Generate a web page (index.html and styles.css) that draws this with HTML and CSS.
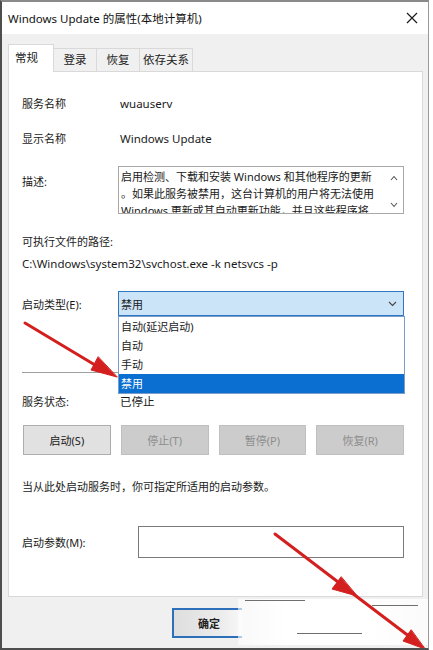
FILE: index.html
```html
<!DOCTYPE html>
<html lang="zh-CN">
<head>
    <meta charset="UTF-8">
    <meta name="viewport" content="width=device-width, initial-scale=1.0">
    <title>Windows Update 的属性(本地计算机)</title>
    <link rel="stylesheet" href="styles.css">
</head>
<body>
    <div class="window">
        <div class="titlebar">
            <span class="title">Windows Update 的属性(本地计算机)</span>
            <svg class="close" width="12" height="12" viewBox="0 0 12 12">
                <path d="M1 1 L11 11 M11 1 L1 11" stroke="#1a1a1a" stroke-width="1.2" fill="none"/>
            </svg>
        </div>

        <div class="tabs">
            <div class="tab active">常规</div>
            <div class="tab">登录</div>
            <div class="tab">恢复</div>
            <div class="tab">依存关系</div>
        </div>

        <div class="panel">
            <div class="row">
                <span class="label">服务名称</span>
                <span class="value">wuauserv</span>
            </div>
            <div class="row row-display">
                <span class="label">显示名称</span>
                <span class="value">Windows Update</span>
            </div>
            <div class="row row-desc">
                <span class="label">描述:</span>
                <div class="desc">
                    <div class="desc-text">
                        <span>启用检测、下载和安装 Windows 和其他程序的更新</span>
                        <span>。如果此服务被禁用，这台计算机的用户将无法使用</span>
                        <span>Windows 更新或其自动更新功能，并且这些程序将</span>
                    </div>
                    <div class="desc-scroll">
                        <svg width="8" height="6" viewBox="0 0 8 6"><path d="M1 5 L4 1.5 L7 5" stroke="#555" stroke-width="1.1" fill="none"/></svg>
                        <svg width="8" height="6" viewBox="0 0 8 6"><path d="M1 1 L4 4.5 L7 1" stroke="#555" stroke-width="1.1" fill="none"/></svg>
                    </div>
                </div>
            </div>

            <div class="path-label">可执行文件的路径:</div>
            <div class="path">C:\Windows\system32\svchost.exe -k netsvcs -p</div>

            <div class="row row-startup">
                <span class="label">启动类型(E):</span>
                <div class="select">
                    <span>禁用</span>
                    <svg width="9" height="6" viewBox="0 0 9 6"><path d="M1 1 L4.5 4.5 L8 1" stroke="#444" stroke-width="1.1" fill="none"/></svg>
                    <ul class="options">
                        <li>自动(延迟启动)</li>
                        <li>自动</li>
                        <li>手动</li>
                        <li class="selected">禁用</li>
                    </ul>
                </div>
            </div>

            <div class="sep"></div>

            <div class="row row-status">
                <span class="label">服务状态:</span>
                <span class="value">已停止</span>
            </div>

            <div class="buttons">
                <button class="btn">启动(S)</button>
                <button class="btn" disabled>停止(T)</button>
                <button class="btn" disabled>暂停(P)</button>
                <button class="btn" disabled>恢复(R)</button>
            </div>

            <p class="hint">当从此处启动服务时，你可指定所适用的启动参数。</p>

            <div class="row row-params">
                <span class="label">启动参数(M):</span>
                <div class="input"></div>
            </div>
        </div>

        <div class="footer">
            <button class="btn-ok">确定</button>
            <!-- erased area next to the OK button -->
            <div class="smear">
                <i class="streak s1"></i>
                <i class="streak s2"></i>
                <i class="streak s3"></i>
            </div>
        </div>

        <!-- red pointer arrows drawn over the dialog -->
        <svg class="arrows" width="433" height="650" viewBox="0 0 433 650">
            <g fill="#d41f1f" stroke="#d41f1f" stroke-linecap="round">
                <line x1="25" y1="323" x2="100" y2="368" stroke-width="3"/>
                <polygon points="117,377 91,370 98,357" stroke-width="1"/>

                <line x1="275" y1="534" x2="342" y2="585" stroke-width="3"/>
                <polygon points="357,596 332,589 341,577" stroke-width="1"/>
                <line x1="352" y1="593" x2="414" y2="640" stroke-width="3"/>
                <polygon points="425,649 403,641 411,630" stroke-width="1"/>
            </g>
        </svg>
    </div>
</body>
</html>
```

FILE: styles.css
```css
/* Base */
body {
    margin: 0;
    background: #ffffff;
    font-family: "Noto Sans", "Noto Sans CJK SC", sans-serif;
    font-size: 11px;
    color: #1a1a1a;
}

/* Dialog frame */
.window {
    position: relative;
    width: 429px;
    height: 650px;
    box-sizing: border-box;
    border-left: 2px solid #4e4e4e;
    border-top: 2px solid #8a8a8a;
    border-right: 1px solid #9a9a9a;
    border-bottom: 2px solid #4e4e4e;
    background: #f0f0f0;
    display: flex;
    flex-direction: column;
    overflow: hidden;
}

/* Title bar */
.titlebar {
    height: 32px;
    background: #ffffff;
    display: flex;
    align-items: center;
    justify-content: space-between;
    padding: 0 10px 0 6px;
    flex-shrink: 0;
}

.title {
    font-size: 11.5px;
    color: #111;
}

/* Tabs */
.tabs {
    display: flex;
    align-items: flex-end;
    height: 37px;
    padding-left: 6px;
    flex-shrink: 0;
}

.tab {
    height: 23px;
    line-height: 22px;
    padding: 0;
    text-align: center;
    white-space: nowrap;
    border: 1px solid #d9d9d9;
    border-bottom: none;
    border-left: none;
    box-sizing: border-box;
    color: #222;
    font-size: 11.5px;
}

.tab.active {
    height: 28px;
    line-height: 26px;
    width: 46px;
    text-align: left;
    padding: 0 6px;
    background: #ffffff;
    border-left: 1px solid #d9d9d9;
    margin-bottom: -1px;
    position: relative;
    z-index: 1;
}

.tab:nth-child(2) { width: 43px; }
.tab:nth-child(3) { width: 43px; }
.tab:nth-child(4) { width: 53px; }

/* Tab page */
.panel {
    margin: 0 5px 0 6px;
    background: #ffffff;
    border: 1px solid #d9d9d9;
    padding: 23px 18px 38px 13px;
    flex-shrink: 0;
}

.row {
    display: flex;
    align-items: center;
    height: 16px;
}

.label {
    width: 96px;
    flex-shrink: 0;
}

.value {
    margin-left: 2px;
    font-size: 11.5px;
}

.row-display {
    margin-top: 19px;
}

/* Description box */
.row-desc {
    margin-top: 20px;
    height: 48px;
    align-items: flex-start;
}

.row-desc .label {
    padding-top: 7px;
}

.desc {
    flex: 1;
    height: 48px;
    box-sizing: border-box;
    border: 1px solid #a8a8a8;
    display: flex;
    overflow: hidden;
}

.desc-text {
    flex: 1;
    padding: 1px 0 0 2px;
    line-height: 17px;
}

.desc-text span {
    display: block;
    white-space: nowrap;
}

.desc-scroll {
    width: 18px;
    display: flex;
    flex-direction: column;
    justify-content: space-between;
    align-items: center;
    padding: 8px 0 5px;
}

/* Executable path */
.path-label {
    margin-top: 20px;
    height: 16px;
    line-height: 16px;
}

.path {
    margin-top: 6px;
    height: 16px;
    line-height: 16px;
    font-size: 11.5px;
}

/* Startup type combo */
.row-startup {
    margin-top: 19px;
    height: 25px;
}

.select {
    position: relative;
    flex: 1;
    height: 25px;
    box-sizing: border-box;
    background: #cce4f7;
    border: 1px solid #2f77c0;
    display: flex;
    align-items: center;
    justify-content: space-between;
    padding: 0 6px 0 2px;
}

.options {
    position: absolute;
    top: 24px;
    left: -1px;
    right: -2px;
    margin: 0;
    padding: 0;
    list-style: none;
    background: #ffffff;
    border: 1px solid #7a9cc6;
    z-index: 2;
}

.options li {
    height: 19px;
    line-height: 19px;
    padding-left: 2px;
}

.options li.selected {
    background: #0a6fd1;
    color: #ffffff;
}

.sep {
    margin-top: 56px;
    height: 1px;
    background: #a0a0a0;
}

.row-status {
    margin-top: 20px;
}

/* Service control buttons */
.buttons {
    margin: 16px 0 0 1px;
    display: grid;
    grid-template-columns: repeat(4, 1fr);
    gap: 10px;
}

.btn {
    height: 30px;
    font-family: inherit;
    font-size: 11px;
    color: #1a1a1a;
    background: #e1e1e1;
    border: 1px solid #adadad;
}

.btn:disabled {
    background: #cccccc;
    border-color: #bfbfbf;
    color: #8c8c8c;
}

.hint {
    margin: 24px 0 0;
    height: 16px;
    line-height: 16px;
}

/* Start parameters */
.row-params {
    margin-top: 31px;
    height: 32px;
}

.row-params .label {
    width: 116px;
}

.input {
    flex: 1;
    height: 32px;
    box-sizing: border-box;
    border: 1px solid #7a7a7a;
}

/* Bottom button strip */
.footer {
    position: relative;
    flex: 1;
    padding: 11px 0 0 170px;
}

.btn-ok {
    width: 70px;
    height: 30px;
    font-family: inherit;
    font-size: 11px;
    font-weight: bold;
    color: #222;
    border: 2px solid #2d6fb8;
    border-right: none;
    background: linear-gradient(to right, #dedede, #ececec 70%, #f8f8f8);
    text-align: left;
    padding-left: 24px;
}

.smear {
    position: absolute;
    left: 236px;
    top: 2px;
    width: 190px;
    height: 46px;
    background: linear-gradient(to right, rgba(255,255,255,0.6), #ffffff 25%, #ffffff 70%, rgba(255,255,255,0.7));
}

.streak {
    position: absolute;
    height: 1px;
    background: #6f6f6f;
}

.s1 { left: 7px; top: 1px; width: 60px; }
.s2 { left: 134px; top: 6px; width: 46px; }
.s3 { left: 59px; top: 34px; width: 65px; }

/* Overlay arrows */
.arrows {
    position: absolute;
    left: -2px;
    top: -2px;
    pointer-events: none;
    z-index: 5;
}
```
